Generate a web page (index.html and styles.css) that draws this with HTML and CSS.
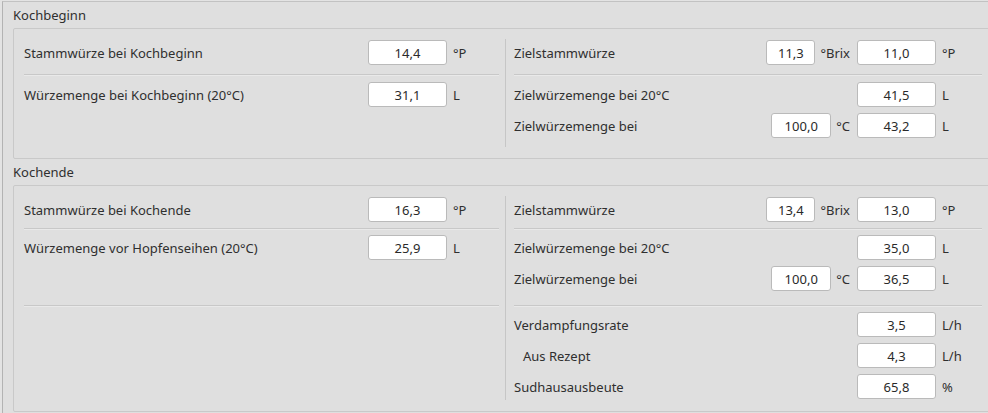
FILE: index.html
```html
<!DOCTYPE html>
<html lang="de">
<head>
<meta charset="utf-8">
<title>Kochen</title>
<link rel="stylesheet" href="styles.css">
</head>
<body>
<div class="page">
  <section class="group">
    <div class="group-title">Kochbeginn</div>
    <div class="frame frame--loose">
      <div class="col col-left">
        <div class="row"><span class="label">Stammwürze bei Kochbeginn</span><span class="field">14,4</span><span class="unit unit-left">°P</span></div>
        <div class="sep sep--loose"></div>
        <div class="row"><span class="label">Würzemenge bei Kochbeginn (20°C)</span><span class="field">31,1</span><span class="unit unit-left">L</span></div>
      </div>
      <div class="vdiv"></div>
      <div class="col col-right">
        <div class="row"><span class="label">Zielstammwürze</span><span class="field field-s">11,3</span><span class="unit-s">°Brix</span><span class="field">11,0</span><span class="unit">°P</span></div>
        <div class="sep sep--loose"></div>
        <div class="row"><span class="label">Zielwürzemenge bei 20°C</span><span class="field">41,5</span><span class="unit">L</span></div>
        <div class="row"><span class="label">Zielwürzemenge bei</span><span class="field field-m">100,0</span><span class="unit-s">°C</span><span class="field">43,2</span><span class="unit">L</span></div>
      </div>
    </div>
  </section>
  <section class="group">
    <div class="group-title">Kochende</div>
    <div class="frame">
      <div class="col col-left">
        <div class="row"><span class="label">Stammwürze bei Kochende</span><span class="field">16,3</span><span class="unit unit-left">°P</span></div>
        <div class="sep"></div>
        <div class="row"><span class="label">Würzemenge vor Hopfenseihen (20°C)</span><span class="field">25,9</span><span class="unit unit-left">L</span></div>
        <div class="row row-empty"></div>
        <div class="sep sep--wide"></div>
      </div>
      <div class="vdiv"></div>
      <div class="col col-right">
        <div class="row"><span class="label">Zielstammwürze</span><span class="field field-s">13,4</span><span class="unit-s">°Brix</span><span class="field">13,0</span><span class="unit">°P</span></div>
        <div class="sep"></div>
        <div class="row"><span class="label">Zielwürzemenge bei 20°C</span><span class="field">35,0</span><span class="unit">L</span></div>
        <div class="row"><span class="label">Zielwürzemenge bei</span><span class="field field-m">100,0</span><span class="unit-s">°C</span><span class="field">36,5</span><span class="unit">L</span></div>
        <div class="sep sep--wide"></div>
        <div class="row"><span class="label">Verdampfungsrate</span><span class="field">3,5</span><span class="unit">L/h</span></div>
        <div class="row"><span class="label label-indent">Aus Rezept</span><span class="field">4,3</span><span class="unit">L/h</span></div>
        <div class="row"><span class="label">Sudhausausbeute</span><span class="field">65,8</span><span class="unit">%</span></div>
      </div>
    </div>
  </section>
</div>
</body>
</html>
```
FILE: styles.css
```css
html, body {
  margin: 0;
  padding: 0;
  overflow: hidden;
  background: #e3e3e3;
}
body {
  font-family: "Noto Sans", "Open Sans", sans-serif;
  font-size: 13px;
  color: #2f2f2f;
  width: 988px;
  height: 413px;
}
.page {
  margin: 1px 0 0 2px;
  border-left: 1px solid #b3b3b3;
  border-top: 1px solid #c2c2c2;
  background: #dfdfdf;
  padding: 4px 0 0 10px;
  width: 986px;
  height: 412px;
  box-sizing: border-box;
  overflow: hidden;
}
.group + .group {
  margin-top: 4px;
}
.group-title {
  height: 18px;
  line-height: 18px;
  margin-bottom: 4px;
  white-space: nowrap;
}
.frame {
  display: flex;
  align-items: stretch;
  border: 1px solid #c9c9c9;
  border-radius: 2px;
  padding: 10px 10px 11px 10px;
  width: 980px;
  box-sizing: border-box;
  flex-shrink: 0;
}
.col {
  display: flex;
  flex-direction: column;
  gap: 6px;
  padding: 1px 0;
  flex-shrink: 0;
}
.frame--loose .col {
  padding-bottom: 9px;
}
.col-left {
  width: 475px;
}
.col-right {
  width: 468px;
}
.vdiv {
  width: 1px;
  flex-shrink: 0;
  background: #c6c6c6;
  margin: 0 8px 0 6px;
}
.row {
  display: flex;
  align-items: center;
  height: 25px;
}
.label {
  flex: 1;
  white-space: nowrap;
  padding-top: 1px;
}
.label-indent {
  padding-left: 9px;
}
.field {
  box-sizing: border-box;
  width: 79px;
  height: 25px;
  line-height: 23px;
  padding-top: 1px;
  background: #ffffff;
  border: 1px solid #bababa;
  border-radius: 3px;
  text-align: center;
  color: #2a2a2a;
}
.field-s {
  width: 49px;
}
.field-m {
  width: 60px;
}
.unit {
  width: 40px;
  margin-left: 6px;
  white-space: nowrap;
  padding-top: 1px;
}
.unit-left {
  width: 46px;
}
.unit-s {
  margin: 0 7px 0 5px;
  white-space: nowrap;
  padding-top: 1px;
}
.sep {
  height: 1px;
  background: #c8c8c8;
  border-bottom: 1px solid #e9e9e9;
  margin-bottom: -1px;
}
.sep--loose {
  margin-top: 3px;
  margin-bottom: 0px;
}
.sep--wide {
  margin-top: 8px;
}
.row-empty {
  height: 25px;
}
```
